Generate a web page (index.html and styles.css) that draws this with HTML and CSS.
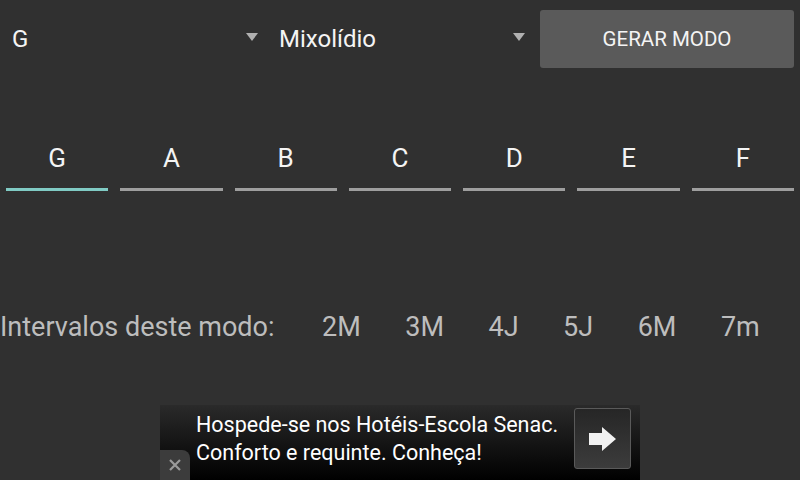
FILE: index.html
```html
<!DOCTYPE html>
<html lang="pt">
<head>
<meta charset="utf-8">
<title>Modos</title>
<link rel="stylesheet" href="styles.css">
</head>
<body>
<div class="screen">
  <div class="top-row">
    <div class="spinner spinner-key">
      <span class="spinner-text">G</span>
      <span class="caret"></span>
    </div>
    <div class="spinner spinner-mode">
      <span class="spinner-text">Mixolídio</span>
      <span class="caret"></span>
    </div>
    <button class="gen-btn">GERAR MODO</button>
  </div>

  <div class="tabs">
    <div class="tab active"><span class="tab-label">G</span><span class="tab-line"></span></div>
    <div class="tab"><span class="tab-label">A</span><span class="tab-line"></span></div>
    <div class="tab"><span class="tab-label">B</span><span class="tab-line"></span></div>
    <div class="tab"><span class="tab-label">C</span><span class="tab-line"></span></div>
    <div class="tab"><span class="tab-label">D</span><span class="tab-line"></span></div>
    <div class="tab"><span class="tab-label">E</span><span class="tab-line"></span></div>
    <div class="tab"><span class="tab-label">F</span><span class="tab-line"></span></div>
  </div>

  <div class="intervals">
    <span class="int-label">Intervalos deste modo:</span>
    <span>2M</span>
    <span>3M</span>
    <span>4J</span>
    <span>5J</span>
    <span>6M</span>
    <span>7m</span>
  </div>

  <div class="ad">
    <div class="ad-text">
      <div>Hospede-se nos Hotéis-Escola Senac.</div>
      <div>Conforto e requinte. Conheça!</div>
    </div>
    <div class="ad-go">
      <svg width="27" height="24" viewBox="0 0 27 24"><path d="M0 6H13V0L27 12L13 24V18H0Z" fill="#f2f2f2"/></svg>
    </div>
    <div class="ad-close">
      <svg width="12" height="12" viewBox="0 0 12 12"><path d="M1 1L11 11M11 1L1 11" stroke="#9a9a9a" stroke-width="2.2"/></svg>
    </div>
  </div>
</div>
</body>
</html>
```
FILE: styles.css
```css
html, body {
  margin: 0;
  padding: 0;
  background: #303030;
}
.screen {
  width: 800px;
  height: 480px;
  overflow: hidden;
  font-family: Roboto, "Liberation Sans", sans-serif;
  color: #f4f4f4;
}
.top-row {
  display: flex;
  padding: 10px 6px 0 0;
  height: 58px;
}
.spinner {
  display: flex;
  align-items: center;
  justify-content: space-between;
  height: 58px;
  box-sizing: border-box;
}
.spinner-key {
  width: 270px;
  padding: 0 12px 0 12px;
}
.spinner-mode {
  width: 267px;
  padding: 0 12px 0 9px;
}
.spinner-text {
  font-size: 24px;
  line-height: 30px;
  margin-top: -1px;
}
.caret {
  width: 0;
  height: 0;
  border-left: 6.5px solid transparent;
  border-right: 6.5px solid transparent;
  border-top: 8px solid #b0b0b0;
  margin-top: -5px;
}
.gen-btn {
  margin-left: 3px;
  flex: 1;
  height: 58px;
  background: #5a5a5a;
  border: none;
  border-radius: 3px;
  color: #f4f4f4;
  font-family: Roboto, "Liberation Sans", sans-serif;
  font-size: 20.5px;
  padding: 0;
}
.tabs {
  display: grid;
  grid-template-columns: repeat(7, 1fr);
  margin-top: 62px;
}
.tab {
  display: flex;
  flex-direction: column;
  align-items: center;
  padding: 0 6px;
}
.tab-label {
  font-size: 26px;
  line-height: 56px;
}
.tab-line {
  align-self: stretch;
  height: 3px;
  margin-top: 2px;
  background: #9e9e9e;
}
.tab.active .tab-line {
  background: #80cbc4;
}
.intervals {
  display: flex;
  gap: 44.5px;
  margin-top: 121px;
  font-size: 27px;
  line-height: 30px;
  color: #bdbdbd;
}
.int-label {
  margin-right: 3px;
}
.ad {
  position: relative;
  width: 480px;
  height: 75px;
  margin: 63px auto 0;
  background: linear-gradient(#2a2a2a, #000000);
  display: flex;
  box-sizing: border-box;
  padding: 3px 9px 0 36px;
}
.ad-text {
  flex: 1;
  font-size: 21.5px;
  line-height: 28px;
  color: #ffffff;
  padding-top: 3px;
}
.ad-go {
  width: 57px;
  height: 61px;
  box-sizing: border-box;
  border: 1px solid #5a5a5a;
  border-radius: 3px;
  background: linear-gradient(#262626, #3c3c3c);
  display: flex;
  align-items: center;
  justify-content: center;
}
.ad-close {
  position: absolute;
  left: 0;
  bottom: 0;
  width: 30px;
  height: 30px;
  background: #3c3c3c;
  border-top-right-radius: 8px;
  display: flex;
  align-items: center;
  justify-content: center;
}
```
